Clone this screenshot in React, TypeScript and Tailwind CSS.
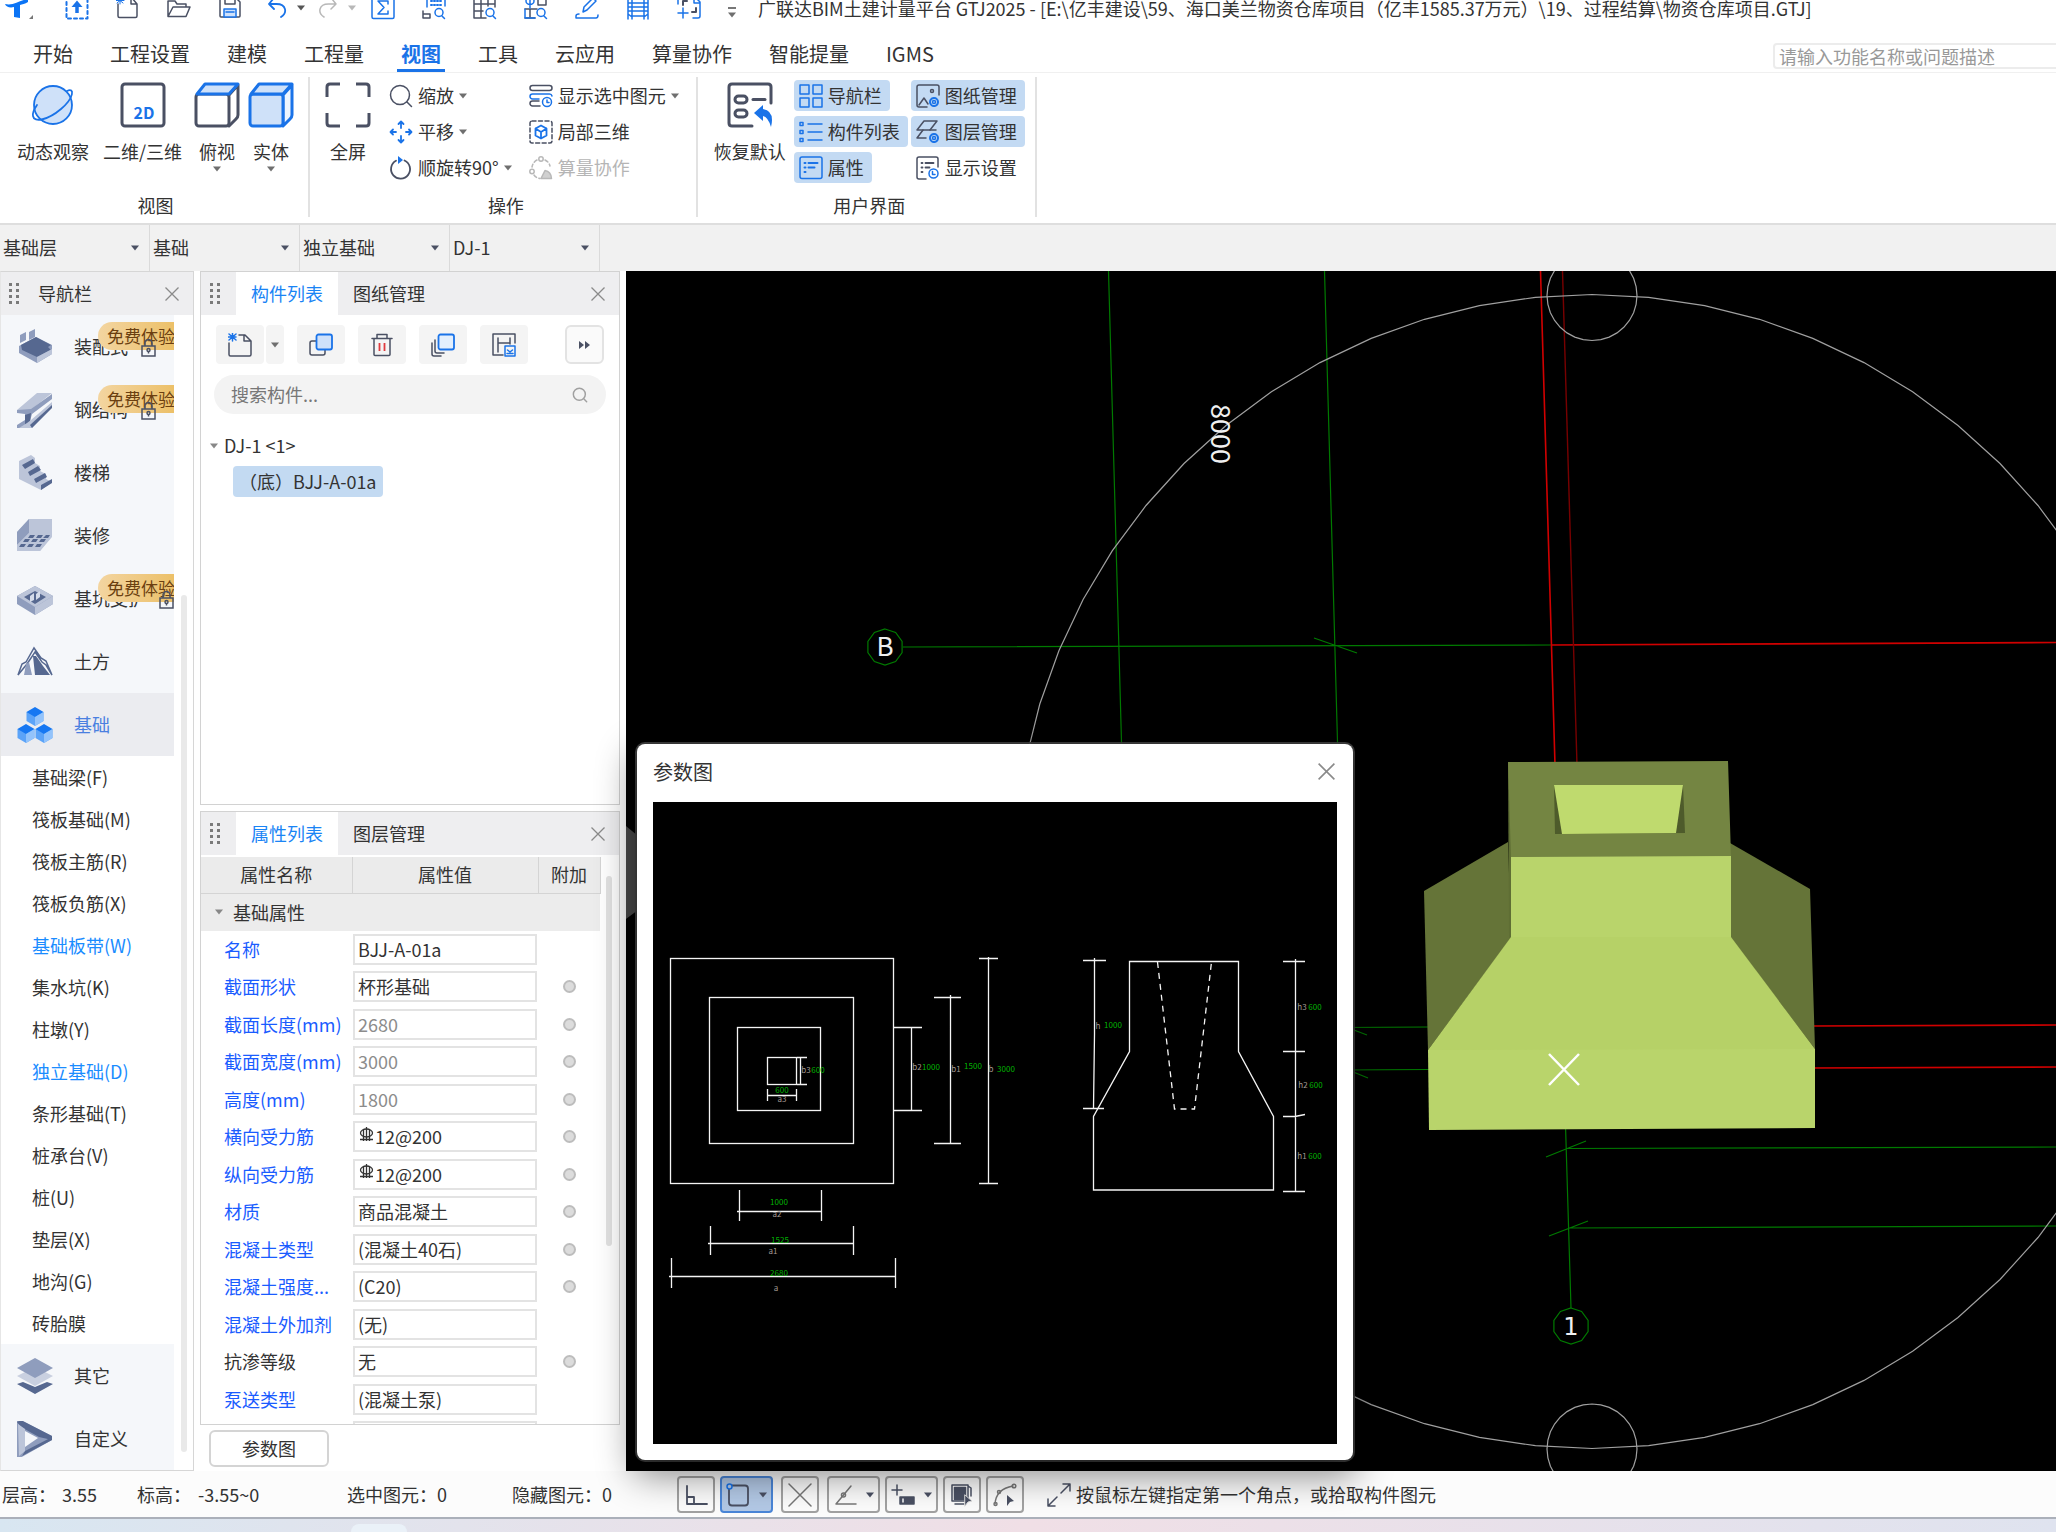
import React from "react";

type Kids = { children?: React.ReactNode };

const BLUE = "#1a73e8";
const SLATE = "#4a5063";

function Ico({ children, w = 24, h = 24, box = "0 0 24 24", c = SLATE, sw = 1.5 }: Kids & { w?: number; h?: number; box?: string; c?: string; sw?: number }) {
  return (
    <svg width={w} height={h} viewBox={box} fill="none" stroke={c} strokeWidth={sw} strokeLinecap="round" strokeLinejoin="round" className="shrink-0" aria-hidden="true">
      {children}
    </svg>
  );
}

function Caret({ c = "#6f6f6f" }: { c?: string }) {
  return (
    <svg width="8" height="6" viewBox="0 0 8 6" className="shrink-0" aria-hidden="true">
      <path d="M0 0.5h8L4 5.5z" fill={c} />
    </svg>
  );
}

function CloseIcon({ size = 14 }: { size?: number }) {
  return (
    <svg width={size} height={size} viewBox="0 0 14 14" stroke="#8a8a8a" strokeWidth="1.3" aria-hidden="true">
      <path d="M0.5 0.5l13 13M13.5 0.5l-13 13" />
    </svg>
  );
}

function Grip() {
  return (
    <svg width="11" height="22" viewBox="0 0 11 22" fill="#7a7a7a" className="shrink-0" aria-hidden="true">
      {[0, 6, 12, 18].map((y) => (
        <g key={y}>
          <rect x="0" y={y} width="3" height="3" />
          <rect x="7" y={y} width="3" height="3" />
        </g>
      ))}
    </svg>
  );
}

/* ---------- title bar ---------- */

const quick: { name: string; menu?: string; icon: React.ReactNode }[] = [
  { name: "上传", icon: <Ico c={BLUE}><path d="M1.500 0v22.500h21V0" strokeDasharray="3 3" strokeWidth="2" /><path d="M12 17V8" strokeWidth="3.500" strokeLinecap="butt" /><path d="M6.500 11L12 4.500 17.500 11z" fill={BLUE} stroke="none" /></Ico> },
  { name: "新建", icon: <Ico><path d="M2 8v12q0 1.500 1.500 1.500h16q1.500 0 1.500-1.500V8l-5-6h-5M15 3v5h6" /><path d="M1 2l6 5M7 2L1 7M4 1v7M0 4.500h8" stroke={BLUE} strokeWidth="1" /></Ico> },
  { name: "打开", icon: <Ico><path d="M1 20V5h7l2 3h9v3M1 20.500L6 11h17l-4 9.500z" /></Ico> },
  { name: "保存", icon: <Ico><path d="M2 20V4q0-1.500 1.500-1.500h15L22 6v14q0 1-1 1H3q-1 0-1-1zM7 3v5h10V3" /><path d="M6 21v-8h12v8z" fill="#cfe1fa" stroke={BLUE} /><path d="M8 16h8" stroke={BLUE} /></Ico> },
  { name: "撤销", menu: "#555555", icon: <span className="-ml-1 flex"><Ico c={BLUE} sw={1.8}><path d="M8 3L4 8l5 5M4 8h7.500c10 0 11 9 4.500 13" /></Ico></span> },
  { name: "恢复", menu: "#b8b8b8", icon: <span className="-ml-1 flex"><Ico c="#b8b8b8"><path d="M16 3l4 5-5 5M20 8h-7.500C2.500 8 1.500 17 8 21" /></Ico></span> },
  { name: "汇总计算", icon: <Ico c={BLUE}><rect x="1" y="0" width="22" height="22.500" rx="1.500" /><path d="M17 8V5H7l6 6.500L7 18h10v-3" /></Ico> },
  { name: "计算式", icon: <Ico c={BLUE}><path d="M5 2h18v8M5 2v9" /><path d="M9 5h1m2 0h1m2 0h1m2 0h1M9 9h1m2 0h1m2 0h1m2 0h1" strokeWidth="2" /><path d="M1 15v7h7v-4H1z" stroke={SLATE} /><circle cx="17" cy="16.500" r="4" /><path d="M20 20l2.500 2.500" /></Ico> },
  { name: "工程量表", icon: <Ico><path d="M1 2v20h12M1 8h21M1 15h9M8 2v20M15 2v8M22 2v9M1 2h21" /><circle cx="17" cy="16.500" r="4" stroke={BLUE} /><path d="M20 20l2.500 2.500" stroke={BLUE} /></Ico> },
  { name: "查看工程量", icon: <Ico><path d="M14 2v7h8V2M1 13h12M6 13v9M1 22h10" /><path d="M2 5a4 3.500 0 0 0 8 0 4 3.500 0 0 0-8 0M6 2v10M1 13v9M1 22h10" stroke={BLUE} /><circle cx="17" cy="16.500" r="4" stroke={BLUE} /><path d="M20 20l2.500 2.500" stroke={BLUE} /></Ico> },
  { name: "编辑", icon: <Ico c={BLUE}><path d="M8 16l1-5 9-9 3 3-9 9-4 2zM1 22v-2q0-2 3-2M1 22h20q2 0 2-3" /></Ico> },
  { name: "钢筋三维", icon: <Ico c={BLUE}><path d="M2 1v22M6 1v22M18 1v22M22 1v22M2 3h20M2 7h20M2 11h20M2 15h20M6 20h12M2 18l4 3M22 18l-4 3" /></Ico> },
  { name: "选择区域", icon: <Ico c={BLUE}><path d="M15 2h4l4 4v14q0 2-2 2h-5M17 2v5h6M1 17h10M6 12v10M1 8V3" /><path d="M6 9V5h4M19 12v4h-4" stroke={SLATE} strokeWidth="2" /></Ico> },
];

function TitleBar() {
  return (
    <div className="flex h-9 shrink-0 items-start overflow-hidden">
      <div className="-mt-1 flex h-6 items-center">
        <div className="w-[65px]">
          <svg width="36" height="24" viewBox="0 0 36 24" aria-label="GTJ" role="img">
            <path d="M5 8C14 10 20 4 28 3V6C25 8 22 8 20 9V22L14 21V11C10 12 6 11 5 8z" fill="#0b74f5" />
            <path d="M33 19v4h-4z" fill="#777" />
          </svg>
        </div>
        {quick.map((q) => (
          <button key={q.name} type="button" aria-label={q.name} className="flex w-[51px] items-center gap-2">
            {q.icon}
            {q.menu && <Caret c={q.menu} />}
          </button>
        ))}
        <button type="button" aria-label="自定义快速访问" className="mr-[22px] flex flex-col items-center gap-[3px] pt-2">
          <span className="h-[2px] w-2 bg-[#777]" />
          <Caret />
        </button>
        <h1 className="text-[18px] leading-6 whitespace-pre text-[#333]">广联达BIM土建计量平台 GTJ2025 - [E:\亿丰建设\59、海口美兰物资仓库项目（亿丰1585.37万元）\19、过程结算\物资仓库项目.GTJ]</h1>
      </div>
    </div>
  );
}

function MenuTabs() {
  const tabs = ["开始", "工程设置", "建模", "工程量", "视图", "工具", "云应用", "算量协作", "智能提量", "IGMS"];
  return (
    <div className="flex h-[37px] shrink-0 items-center justify-between border-b border-[#f0f0f0] pl-[33px]">
      <nav className="flex h-full gap-[29px]">
        {tabs.map((t) =>
          t === "视图" ? (
            <button key={t} type="button" className="h-full border-b-3 border-[#1a73e8] px-1 pt-[3px] text-[20px] font-bold text-[#1a73e8]">{t}</button>
          ) : (
            <button key={t} type="button" className="h-full border-b-3 border-transparent px-1 pt-[3px] text-[20px] text-[#333] first:pl-0">{t}</button>
          ),
        )}
      </nav>
      <input aria-label="搜索功能" placeholder="请输入功能名称或问题描述" className="mt-4 -mr-[7px] mb-3 h-[26px] w-[290px] rounded-sm border-2 border-[#ececec] px-1 text-[18px] text-[#333] placeholder:text-[#999]" />
    </div>
  );
}

/* ---------- ribbon ---------- */

function BigTool({ icon, label, caret }: { icon: React.ReactNode; label: string; caret?: boolean }) {
  return (
    <button type="button" className="flex flex-col items-center">
      <span className="flex h-[46px] items-center">{icon}</span>
      <span className="mt-[11px] mb-[3px] text-[18px] leading-6">{label}</span>
      {caret && <Caret />}
    </button>
  );
}

function SmallTool({ icon, label, caret, on, off }: { icon: React.ReactNode; label: string; caret?: boolean; on?: boolean; off?: boolean }) {
  return (
    <button
      type="button"
      disabled={off}
      aria-pressed={on}
      className="flex h-[31px] items-center gap-[5px] self-start rounded-sm pr-2 pl-[5px] text-[18px] disabled:text-[#b5b5b5] aria-pressed:bg-[#c3daf3]"
    >
      {icon}
      <span>{label}</span>
      {caret && <Caret />}
    </button>
  );
}

function Group({ label, children, pad }: Kids & { label: string; pad: string }) {
  return (
    <section className={`flex flex-col justify-between border-r-2 border-[#e2e2e2] ${pad}`}>
      <div className="flex items-start">{children}</div>
      <h2 className="text-center text-[18px] leading-6">{label}</h2>
    </section>
  );
}

const gear = <g stroke={BLUE}><circle cx="18" cy="18" r="4" strokeDasharray="2.200 1" strokeWidth="2" /><circle cx="18" cy="18" r="1.500" /></g>;

function Ribbon() {
  return (
    <div className="flex h-[152px] shrink-0 border-b-2 border-[#dedede] pt-1 pb-1.5 text-[#333]">
      <Group label="视图" pad="pl-[17px] pr-[14px]">
        <div className="flex pt-[5px]">
          <BigTool label="动态观察" icon={<Ico w={44} h={42} box="0 0 44 42" c={BLUE} sw={1.8}><circle cx="22" cy="21" r="19" fill="#cfe1f9" /><path d="M36 7C44 3 43 14 30 25 17 36 3 39 2 32 1 28 4 24 6 21" /></Ico>} />
          <div className="w-[14px]" />
          <BigTool label="二维/三维" icon={<svg width="46" height="46" viewBox="0 0 46 46" aria-hidden="true"><rect x="2" y="2" width="42" height="42" rx="3" fill="#fff" stroke={SLATE} strokeWidth="3" /><text x="24" y="37" textAnchor="middle" fontSize="16" fontWeight="700" fill={BLUE}>2D</text></svg>} />
          <div className="w-[12px]" />
          <BigTool caret label="俯视" icon={<Ico w={46} h={46} box="0 0 46 46" sw={3}><path d="M35 13L44 3v30q0 2-2 4l-7 7" /><rect x="2" y="12" width="33" height="32" rx="3" fill="#fff" /><path d="M3 12L11 2h33l-9 10z" fill="#cfe1f9" stroke={BLUE} /></Ico>} />
          <div className="w-[8px]" />
          <BigTool caret label="实体" icon={<Ico w={46} h={46} box="0 0 46 46" sw={3} c={BLUE}><path d="M35 13L44 3v30q0 2-2 4l-7 7z" fill="#eef5fe" /><rect x="2" y="12" width="33" height="32" rx="3" fill="#cfe1f9" /><path d="M3 12L11 2h33l-9 10z" fill="#cfe1f9" /></Ico>} />
        </div>
      </Group>
      <Group label="操作" pad="pl-[15px] pr-[9px]">
        <div className="pt-[5px]">
          <BigTool label="全屏" icon={<Ico w={46} h={46} box="0 0 46 46" sw={3}><path d="M2 15V5q0-3 3-3h10M31 2h10q3 0 3 3v10M44 31v10q0 3-3 3H31M15 44H5q-3 0-3-3V31" strokeLinecap="butt" /></Ico>} />
        </div>
        <div className="ml-[13px] flex flex-col gap-[5px] pt-[3px]">
          <SmallTool caret label="缩放" icon={<Ico><circle cx="11" cy="11" r="9.500" /><path d="M18 18l4.500 4.500" /></Ico>} />
          <SmallTool caret label="平移" icon={<Ico c={BLUE} sw={2}><path d="M9.500 4L12 1.500 14.500 4M12 2v6M9.500 20l2.500 2.500 2.500-2.500M12 22v-6M4 9.500L1.500 12 4 14.500M2 12h5M20 9.500l2.500 2.500-2.500 2.500M22 12h-5" strokeWidth="1.800" /></Ico>} />
          <SmallTool caret label="顺旋转90°" icon={<Ico sw={1.8}><path d="M15.500 4.500A9.500 9.500 0 1 1 7 4.800" /><path d="M9 0v8l5-4z" fill={BLUE} stroke="none" /></Ico>} />
        </div>
        <div className="flex flex-col gap-[5px] pt-[3px] pl-1">
          <SmallTool caret label="显示选中图元" icon={<Ico><rect x="1" y="1.500" width="22" height="5" rx="2.500" /><path d="M11 22H3.500a2.500 2.500 0 0 1 0-5H10" /><path d="M10 15H3.500a2.500 2.500 0 0 1 0-5h17q2 0 2.500 2" stroke={BLUE} /><circle cx="18" cy="18" r="4.500" stroke={BLUE} /><path d="M18 16v2.500h2" stroke={BLUE} /></Ico>} />
          <SmallTool label="局部三维" icon={<Ico><rect x="1" y="1" width="22" height="22" rx="2" strokeDasharray="4 2.500" /><g stroke={BLUE}><path d="M12 5.500l5.500 3v7L12 18.500l-5.500-3v-7zM6.500 8.500L12 12l5.500-3.500M12 12v6" strokeWidth="1.800" /></g></Ico>} />
          <SmallTool off label="算量协作" icon={<Ico c="#b8b8b8"><circle cx="12" cy="3" r="2.200" /><circle cx="3" cy="15.500" r="2.200" /><path d="M8 4Q4 6 3 11M16 4q4 2 5 6M5 19q2 3 6 3.500" strokeDasharray="3.500 2.500" /><path d="M12 22.500l4-8q6 1 6.500 8z" fill="#d0d0d0" /></Ico>} />
        </div>
      </Group>
      <Group label="用户界面" pad="pl-[16px] pr-[10px]">
        <div className="pt-[5px]">
          <BigTool label="恢复默认" icon={<Ico w={46} h={46} box="0 0 46 46" sw={3}><path d="M44 21V5q0-3-3-3H5Q2 2 2 5v36q0 3 3 3h20" /><rect x="8" y="14" width="12" height="7" rx="3.500" /><rect x="8" y="28" width="12" height="7" rx="3.500" /><path d="M26 17.500h12" /><path d="M44 45q4-16-8-18v-4l-9 8 9 8v-5q5 1 8 11z" fill={BLUE} stroke="none" /></Ico>} />
        </div>
        <div className="ml-2 flex flex-col gap-[5px] pt-[3px]">
          <SmallTool on label="导航栏" icon={<Ico c={BLUE}><rect x="1" y="1" width="9" height="9" /><rect x="14" y="1" width="9" height="9" /><rect x="1" y="14" width="9" height="9" /><rect x="14" y="14" width="9" height="9" /></Ico>} />
          <SmallTool on label="构件列表" icon={<Ico c={BLUE}><rect x="1" y="2.500" width="3" height="3" /><rect x="1" y="10.500" width="3" height="3" /><rect x="1" y="18.500" width="3" height="3" /><path d="M9 4h14M9 12h14M9 20h14" /></Ico>} />
          <SmallTool on label="属性" icon={<Ico c={BLUE}><rect x="1" y="1" width="22" height="21.500" rx="2" /><path d="M5.500 7h1M9.500 7h9M5.500 11.500h1M9.500 11.500h6M5.500 16h1" strokeWidth="2" /></Ico>} />
        </div>
        <div className="ml-[3px] flex flex-col gap-[5px] pt-[3px]">
          <SmallTool on label="图纸管理" icon={<Ico><path d="M23 11V3q0-2-2-2H3Q1 1 1 3v18q0 2 2 2h8" /><circle cx="16" cy="7" r="1.500" /><path d="M3 21l5-7 4 6" />{gear}</Ico>} />
          <SmallTool on label="图层管理" icon={<Ico><path d="M8 1h13l-7 9H1z" /><path d="M14 10h6M7 10l-6 8h9" />{gear}</Ico>} />
          <SmallTool label="显示设置" icon={<Ico><path d="M22 11V3q0-2-2-2H3Q1 1 1 3v18q0 2 2 2h7" /><path d="M5.500 7h1M9.500 7h8M5.500 11.500h1M9.500 11.500h4M5.500 16h1" strokeWidth="1.800" /><circle cx="17.500" cy="17.500" r="4.500" stroke={BLUE} /><path d="M16.500 15.500v3h2.500" stroke={BLUE} /></Ico>} />
        </div>
      </Group>
    </div>
  );
}

function Selectors() {
  return (
    <div className="flex h-[46px] shrink-0 bg-[#f1f1f1] text-[#333]">
      {[["楼层", "基础层"], ["类别", "基础"], ["构件类型", "独立基础"], ["构件", "DJ-1"]].map(([n, v]) => (
        <div key={n} className="relative h-full w-[150px] border-r border-[#dadada]">
          <select aria-label={n} defaultValue={v} className="h-[45px] w-full appearance-none bg-transparent pl-[3px] text-[18px]">
            <option>{v}</option>
          </select>
          <span className="pointer-events-none absolute inset-y-0 right-2.5 flex items-center"><Caret c="#4a5063" /></span>
        </div>
      ))}
    </div>
  );
}

/* ---------- navigation ---------- */

const L = "#bcc5d9", M = "#8f9dbd", D = "#566890";

function NavIcon({ kind }: { kind: string }) {
  const art: Record<string, React.ReactNode> = {
    装配式: <><path d="M3 6l6-3v8l-6 3zM12 3l6-3v8l-6 3z" fill={M} /><path d="M2 17l17-9 16 8v9l-15 9L2 24z" fill={M} /><path d="M4 16L19 8l15 8-3 2 3 3-14 7L5 21z" fill={D} /><path d="M20 28l15-8v5l-15 9z" fill={L} /></>,
    钢结构: <><path d="M0 18L20 1h15L15 17l-2 3H0z" fill={L} /><path d="M0 18l14-1L35 2v5L15 22l-2 7v7H0v-3l8-5v-6L0 21z" fill={M} /><path d="M8 23l6-2-1 9-5 3z" fill={D} /><path d="M14 28L35 10v5L15 36H2l8-5z" fill={L} /><path d="M13 33L35 13v3L15 36z" fill={D} /></>,
    楼梯: <><path d="M2 6l12-6 4 3v5l5 3v5l6 3v5l6 3-11 8L2 24z" fill={L} /><path d="M5 10l11-6 2 4-10 6zM11 17l10-6 3 4-11 6zM17 24l11-6 2 4-11 6zM24 30l11-6v4l-11 7z" fill={D} /></>,
    装修: <><path d="M0 14L12 1h23v17L23 33H0z" fill={L} /><path d="M12 1v14L0 27V14z" fill={M} /><path d="M12 15h23v4L23 33H0v-6z" fill={L} /><path d="M13 17h5l-2 3h-5zM21 17h5l-2 3h-5zM29 17h4l-2 3h-5zM8 21h5l-2 3H6zM16 21h5l-2 3h-5zM24 21h5l-2 3h-5zM4 26h5l-2 3H2zM12 26h5l-2 3h-5zM20 26h5l-2 3h-5z" fill={D} /></>,
    基坑支护: <><path d="M18 5l18 10v8L18 34 0 23v-8z" fill={M} /><path d="M18 5l18 10-18 11L0 15z" fill={L} /><path d="M18 26l18-11v8L18 34z" fill={L} /><path d="M18 10l11 6-11 7-11-7z" fill={D} /><path d="M13 15l4-3v7l-4 2zM19 13l4-3v6l-4 3z" fill="#d5dcea" /></>,
    土方: <><path d="M1 31L5 20l4-2 8-14 7 10 5 3 6 14-6-10-4-3-7-10-8 12z" fill="none" stroke={D} strokeWidth="1.500" /><path d="M16 12l3 0 7 10 7 9H18z" fill={D} /><path d="M9 20l3-2 3 13H7z" fill={M} /></>,
    基础: <>{[[18, 0], [9, 17], [27, 17]].map(([x, y]) => <g key={x} transform={`translate(${x} ${y})`}><path d="M-8.500 5v9l8.500 5 8.500-5V5z" fill="#5ba3f8" /><path d="M0 0l8.500 5L0 10l-8.500-5z" fill="#1677f2" /><path d="M0 10v9l8.500-5V5z" fill="#93c3fb" /></g>)}</>,
    其它: <><path d="M0 26l6-2 12 5 12-5 6 2-18 10z" fill={D} /><path d="M18 9l18 9-18 10L0 18z" fill="#c9d0e0" /><path d="M18 0l18 10-18 10L0 10z" fill={M} /></>,
    自定义: <><path d="M0 0l3-1 32 16v4L3 37H0z" fill={M} /><path d="M0 1l4-2 31 16v4l-13-3L4 6z" fill={D} /><path d="M8 10v16l13-9z" fill="#f5f7fa" /><path d="M8 30l27-14v3L5 35z" fill={D} /><path d="M1 3l7 5v22l-6 5z" fill={L} /></>,
  };
  return <svg width="36" height="36" viewBox="0 0 36 36" className="shrink-0" aria-hidden="true">{art[kind]}</svg>;
}

function Lock() {
  return (
    <svg width="15" height="18" viewBox="0 0 15 18" fill="none" stroke="#4a5063" strokeWidth="1.500" aria-hidden="true">
      <path d="M4 7V4a3.500 3.500 0 0 1 7 0v3" /><rect x="1" y="7" width="13" height="10" /><circle cx="7.500" cy="11" r="1.500" /><path d="M7.500 12v2.500" />
    </svg>
  );
}

function NavItem({ name, lock, active }: { name: string; lock?: "near" | "far"; active?: boolean }) {
  return (
    <button type="button" aria-current={active} className="relative flex h-[63px] w-[173px] shrink-0 items-center gap-[21px] bg-[#f5f7fa] pl-[16px] text-[18px] text-[#333] aria-[current=true]:bg-[#ebecf0] aria-[current=true]:text-[#4a7fe0]">
      <NavIcon kind={name} />
      <span className="whitespace-nowrap">{name}</span>
      {lock && (
        <>
          <span className="absolute top-[7px] right-0 h-7 w-[76px] overflow-hidden rounded-l-full bg-linear-to-r from-[#f3d5a0] to-[#ecc068] pl-[9px] text-left text-[17px] leading-7 whitespace-nowrap text-[#6b3f10]">免费体验</span>
          {lock === "near" ? <span className="absolute top-6 right-[18px]"><Lock /></span> : <span className="absolute top-6 right-0"><Lock /></span>}
        </>
      )}
    </button>
  );
}

function Navigator() {
  const subs = ["基础梁(F)", "筏板基础(M)", "筏板主筋(R)", "筏板负筋(X)", "基础板带(W)", "集水坑(K)", "柱墩(Y)", "独立基础(D)", "条形基础(T)", "桩承台(V)", "桩(U)", "垫层(X)", "地沟(G)", "砖胎膜"];
  const hot = ["基础板带(W)", "独立基础(D)"];
  return (
    <aside className="relative flex w-[194px] shrink-0 flex-col overflow-hidden border border-[#d6d6d6] border-l-[#e6e6e6] bg-white">
      <header className="flex h-[43px] shrink-0 items-center bg-[#eeeef0] pr-3.5 pl-2">
        <Grip />
        <h2 className="ml-[18px] flex-1 text-[18px] text-[#333]">导航栏</h2>
        <button type="button" aria-label="关闭"><CloseIcon /></button>
      </header>
      <NavItem name="装配式" lock="near" />
      <NavItem name="钢结构" lock="near" />
      <NavItem name="楼梯" />
      <NavItem name="装修" />
      <NavItem name="基坑支护" lock="far" />
      <NavItem name="土方" />
      <NavItem name="基础" active />
      <ul>
        {subs.map((s) => (
          <li key={s}>
            {hot.includes(s) ? (
              <button type="button" className="block h-[42px] w-full pl-[31px] text-left text-[18px] text-[#1a8cff]">{s}</button>
            ) : (
              <button type="button" className="block h-[42px] w-full pl-[31px] text-left text-[18px] text-[#333]">{s}</button>
            )}
          </li>
        ))}
      </ul>
      <NavItem name="其它" />
      <NavItem name="自定义" />
      <span className="absolute top-[323px] right-[6px] bottom-[18px] w-[6px] rounded-full bg-[#e9e9e9]" />
    </aside>
  );
}

/* ---------- component list and properties ---------- */

function DockHeader({ tabs }: { tabs: [string, string] }) {
  return (
    <header className="flex h-[43px] shrink-0 items-center bg-[#eeeef0] pr-[14px] pl-[9px] text-[18px]">
      <Grip />
      <button type="button" className="ml-[15px] h-full w-[102px] bg-white text-[#1a84f5]">{tabs[0]}</button>
      <button type="button" className="h-full w-[102px] text-[#333]">{tabs[1]}</button>
      <button type="button" aria-label="关闭" className="ml-auto"><CloseIcon /></button>
    </header>
  );
}

const toolBtn = "flex h-[39px] w-[48px] items-center justify-center rounded-sm bg-[#f4f4f4]";

function ComponentList() {
  return (
    <section className="flex h-[534px] shrink-0 flex-col border border-[#d2d2d2] bg-white">
      <DockHeader tabs={["构件列表", "图纸管理"]} />
      <div className="flex items-center gap-[13px] pt-[10px] pr-[15px] pl-[15px]">
        <div className="flex gap-[2px]">
          <button type="button" aria-label="新建" className={toolBtn}><Ico><path d="M1 10v11.500Q1 23 2.500 23h19q1.500 0 1.500-1.500V8l-6-6h-6M16 2v6h7" /><path d="M1 1l7 6M8 1L1 7M4.500 0v8M0 4h8" stroke={BLUE} strokeWidth="1.500" /></Ico></button>
          <button type="button" aria-label="新建选项" className="flex h-[39px] w-[18px] items-center justify-center rounded-sm bg-[#f4f4f4]"><Caret /></button>
        </div>
        <button type="button" aria-label="复制" className={toolBtn}><Ico><rect x="1" y="8" width="15" height="14" rx="2" /><rect x="7.500" y="1.500" width="15.500" height="15" rx="2" fill="#cfe1fa" stroke={BLUE} strokeWidth="1.800" /></Ico></button>
        <button type="button" aria-label="删除" className={toolBtn}><Ico><path d="M2 5.500h20M7 5.500v-4h10v4M4 5.500v16q0 1 1 1h14q1 0 1-1v-16" /><path d="M9.500 10v8M14.500 10v8" stroke="#e03a3e" strokeWidth="1.800" strokeLinecap="butt" /></Ico></button>
        <button type="button" aria-label="层间复制" className={toolBtn}><Ico><path d="M1 10v11q0 2 2 2h7M4 7v11q0 2 2 2h7" /><rect x="7.500" y="1.500" width="15.500" height="15" rx="2" fill="#e3effd" stroke={BLUE} strokeWidth="1.800" /></Ico></button>
        <button type="button" aria-label="存档" className={toolBtn}><Ico><path d="M23 10V1H1v21h10M6 5v14M6 10h11M18 5v6" /><rect x="13" y="13" width="10" height="10" stroke={BLUE} /><path d="M15 20.500h6M15.500 17l2.500 2 2.500-2" stroke={BLUE} /></Ico></button>
        <button type="button" aria-label="更多" className="ml-auto flex h-[39px] w-[39px] items-center justify-center rounded-md border-2 border-[#e3e3e3] bg-[#fafafa]">
          <svg width="11" height="8" viewBox="0 0 11 8" fill={SLATE} aria-hidden="true"><path d="M0 0l5 4-5 4zM6 0l5 4-5 4z" /></svg>
        </button>
      </div>
      <label className="mx-[13px] mt-[11px] flex h-[39px] items-center rounded-full bg-[#f3f3f3] pr-[18px] pl-[17px]">
        <input aria-label="搜索构件" placeholder="搜索构件..." className="min-w-0 flex-1 bg-transparent text-[18px] placeholder:text-[#777]" />
        <Ico w={16} h={16} c="#a0a0a0" sw={2.2}><circle cx="11" cy="11" r="9" /><path d="M18 18l4 4" /></Ico>
      </label>
      <ul className="mt-4 text-[18px] text-[#333]">
        <li>
          <button type="button" className="flex h-[31px] items-center gap-1.5 pl-[9px]"><Caret c="#888" /><span>DJ-1 &lt;1&gt;</span></button>
          <ul>
            <li className="mt-[5px] ml-8 h-[31px] w-[150px] rounded-sm bg-[#c3daf2] pl-1.5 leading-[31px] whitespace-nowrap">（底）BJJ-A-01a</li>
          </ul>
        </li>
      </ul>
    </section>
  );
}

const props: { n: string; v: string; k?: "ro" | "plain" | "bar"; dot?: boolean }[] = [
  { n: "名称", v: "BJJ-A-01a" },
  { n: "截面形状", v: "杯形基础", dot: true },
  { n: "截面长度(mm)", v: "2680", k: "ro", dot: true },
  { n: "截面宽度(mm)", v: "3000", k: "ro", dot: true },
  { n: "高度(mm)", v: "1800", k: "ro", dot: true },
  { n: "横向受力筋", v: "12@200", k: "bar", dot: true },
  { n: "纵向受力筋", v: "12@200", k: "bar", dot: true },
  { n: "材质", v: "商品混凝土", dot: true },
  { n: "混凝土类型", v: "(混凝土40石)", dot: true },
  { n: "混凝土强度...", v: "(C20)", dot: true },
  { n: "混凝土外加剂", v: "(无)" },
  { n: "抗渗等级", v: "无", k: "plain", dot: true },
  { n: "泵送类型", v: "(混凝土泵)" },
];

function PropertyList() {
  return (
    <section className="relative flex h-[614px] shrink-0 flex-col overflow-hidden border border-[#d2d2d2] bg-white">
      <DockHeader tabs={["属性列表", "图层管理"]} />
      <table className="mt-[2px] h-[561px] w-[399px] shrink-0 table-fixed border-collapse text-[18px] text-[#333]">
        <colgroup>
          <col className="w-[151px]" />
          <col className="w-[186px]" />
          <col className="w-[62px]" />
        </colgroup>
        <thead>
          <tr className="h-[36px] bg-[#ebebeb]">
            {["属性名称", "属性值", "附加"].map((h) => (
              <th key={h} scope="col" className="border-r border-b border-[#d4d4d4] p-0 font-normal">{h}</th>
            ))}
          </tr>
        </thead>
        <tbody>
          <tr className="h-[37px] bg-[#ececec]">
            <th colSpan={3} scope="colgroup" className="p-0 text-left font-normal">
              <span className="flex items-center gap-[10px] pl-[14px]"><Caret c="#888" />基础属性</span>
            </th>
          </tr>
          {props.map((p, i) => (
            <tr key={p.n} className="h-[37px]">
              <th scope="row" className="p-0 pl-[23px] text-left font-normal whitespace-nowrap">
                {p.k === "plain" ? <label htmlFor={`p${i}`}>{p.n}</label> : <label htmlFor={`p${i}`} className="text-[#1a5cff]">{p.n}</label>}
              </th>
              <td className="p-0 px-px">
                <span className="flex h-[31px] items-center border-2 border-[#e3e3e3] bg-white pl-[3px]">
                  {p.k === "bar" && (
                    <svg width="17" height="16" viewBox="0 0 17 16" fill="none" stroke="#333" strokeWidth="1.300" className="mb-1 shrink-0" aria-hidden="true">
                      <ellipse cx="8.500" cy="6" rx="6" ry="4" /><path d="M8.500 0v14M5.500 3v11M11.500 3v11M2 12.500h13" />
                    </svg>
                  )}
                  {p.k === "ro" ? (
                    <input id={`p${i}`} readOnly value={p.v} className="w-full min-w-0 text-[#8c8c8c]" />
                  ) : (
                    <input id={`p${i}`} defaultValue={p.v} className="w-full min-w-0" />
                  )}
                </span>
              </td>
              <td className="p-0">
                {p.dot && <button type="button" aria-label={`附加${p.n}`} className="mx-auto block size-[13px] rounded-full border-2 border-[#bdbdbd] bg-[#dcdcdc]" />}
              </td>
            </tr>
          ))}
        </tbody>
      </table>
      <div className="mt-[3px] ml-[152px] h-[31px] w-[184px] shrink-0 border-2 border-[#e3e3e3]" />
      <span className="absolute top-[64px] right-[7px] h-[370px] w-[6px] rounded-full bg-[#e2e2e2]" />
    </section>
  );
}

/* ---------- model view ---------- */

function ring(cx: number, cy: number, r: number, n: number) {
  return Array.from({ length: n }, (_, i) => {
    const a = (i / n) * Math.PI * 2;
    return `${(cx + r * Math.sin(a)).toFixed(1)},${(cy - r * Math.cos(a)).toFixed(1)}`;
  }).join(" ");
}

function ModelView() {
  return (
    <svg className="h-full w-full" viewBox="626 271 1430 1200" preserveAspectRatio="xMinYMin slice" fill="none" role="img" aria-label="三维模型">
      <g stroke="#007a00" strokeWidth="1.200">
        <path d="M1108.500 271L1122 760M1324.500 271L1338 760M903 647L1552 645M1314 638L1357 653" />
        <path d="M1340 1027.500L1428 1027M1340 1070L1430 1069.500M1346 1027L1367 1035M1346 1069L1368 1078" />
        <path d="M1565.500 1125L1571 1308M1566 1148.500L2056 1147M1546 1157L1586 1141M1568 1228L2056 1226M1549 1236L1588 1221" />
        <polygon points={ring(885, 647, 18, 10)} />
        <polygon points={ring(1571, 1326, 18, 10)} />
      </g>
      <path d="M1540.500 271L1555 765M1552 645L2056 642.500M1812 1026L2056 1025M1812 1068L2056 1067" stroke="#d00000" strokeWidth="1.600" />
      <path d="M1562.500 271L1577 765" stroke="#780000" strokeWidth="1.400" />
      <g stroke="#a0a0a0" strokeWidth="1.200">
        <polygon points={ring(1592, 871.5, 577, 64)} />
        <polygon points={ring(1592, 295.5, 45, 32)} />
        <polygon points={ring(1592, 1449, 45, 32)} />
      </g>
      <polygon points="1508,842 1424,891 1428,1050 1511,938" fill="#657438" />
      <polygon points="1730,843 1810,889 1815,1049 1731,938" fill="#657438" />
      <polygon points="1508,762 1512,762 1512,938 1509,938" fill="#5f6e34" />
      <polygon points="1508,762 1728,761 1731,857 1511,858" fill="#748542" />
      <polygon points="1554,786 1683,785 1685,833 1555,834" fill="#4e5b2b" />
      <polygon points="1554,785 1683,785 1676,833 1562,834" fill="#bfda6e" />
      <polygon points="1511,857 1731,856 1731,939 1511,939" fill="#b9d46b" />
      <polygon points="1511,937 1731,937 1815,1049 1815,1053 1428,1053 1428,1050" fill="#b6d167" />
      <polygon points="1428,1050 1815,1049 1815,1128 1429,1130" fill="#b9d46b" />
      <path d="M1549 1054l30 31M1579 1054l-30 31" stroke="#fff" strokeWidth="2.500" />
      <g fill="#f0f0f0" textAnchor="middle">
        <text x="885" y="656" fontSize="26">B</text>
        <text x="1571" y="1335" fontSize="24" fontFamily="DejaVu Sans, sans-serif">1</text>
        <text transform="translate(1211 434) rotate(90)" fontSize="27">8000</text>
      </g>
      <path d="M626 826l12 10v74l-12 9z" fill="#4a4a4a" />
    </svg>
  );
}

function ParamDrawing() {
  const green: [number, number, string][] = [
    [782, 1093, "600"], [818, 1073, "600"], [931, 1070, "1000"], [973, 1069, "1500"], [1006, 1072, "3000"],
    [779, 1205, "1000"], [780, 1243, "1525"], [779, 1276, "2680"],
    [1113, 1028, "1000"], [1315, 1010, "600"], [1316, 1088, "600"], [1315, 1159, "600"],
  ];
  const grey: [number, number, string][] = [
    [782, 1102, "a3"], [806, 1073, "b3"], [917, 1070, "b2"], [956, 1072, "b1"], [991, 1072, "b"],
    [777, 1217, "a2"], [773, 1254, "a1"], [776, 1291, "a"],
    [1098, 1029, "h"], [1302, 1010, "h3"], [1303, 1088, "h2"], [1302, 1159, "h1"],
  ];
  return (
    <svg className="h-full w-full bg-black" viewBox="653 802 684 642" fill="none" role="img" aria-label="杯形基础参数图">
      <g stroke="#f4f4f4" strokeWidth="1.300">
        <rect x="670.500" y="958.500" width="223" height="225" />
        <rect x="709.500" y="997.500" width="144" height="146" />
        <rect x="737.500" y="1027.500" width="83" height="83" />
        <rect x="767.500" y="1057.500" width="29" height="27" />
        <path d="M800.500 1058v27M797 1057.500h10M797 1084.500h10M768 1095.500h29M767.500 1089v12M796.500 1089v12" />
        <path d="M894 1027.500h28M894 1110.500h28M911.500 1028v82M934 997.500h27M934 1143.500h27M950.500 995v148M979 958.500h19M979 1183.500h19M988.500 957v227" />
        <path d="M737 1211.500h85M739.500 1190v31M821.500 1190v31M708 1243.500h145M710.500 1226v29M853.500 1226v29M669 1276.500h226M671.500 1258v30M895.500 1258v30" />
        <path d="M1129.500 961.500h109v90l35 65v73.500h-180v-73.500l36-65z" />
        <path d="M1094.500 958v76l-1 74M1083 960.500h23M1083 1108.500h21M1295.500 959v233M1283 961.500h22M1283 1051.500h22M1283 1116.500h12l10-2M1283 1191.500h22" />
        <path d="M1157.500 962l17 147h20l17-147" strokeDasharray="6 5" />
      </g>
      <g fontSize="8" textAnchor="middle">
        {green.map(([x, y, t]) => <text key={`${x}${y}`} x={x} y={y} fill="#00b400">{t}</text>)}
        {grey.map(([x, y, t]) => <text key={`${x}${y}`} x={x} y={y} fill="#a39a94">{t}</text>)}
      </g>
    </svg>
  );
}

function ParamDialog() {
  return (
    <div role="dialog" aria-label="参数图" className="absolute top-[473px] left-[11px] z-20 flex h-[716px] w-[716px] flex-col rounded-lg bg-white px-4 pb-4 shadow-[0_12px_36px_4px_rgba(0,0,0,0.45),0_0_0_2px_rgba(70,70,70,0.9)]">
      <header className="flex h-[58px] shrink-0 items-center justify-between pr-0.5 pb-[3px]">
        <h2 className="text-[20px] text-[#333]">参数图</h2>
        <button type="button" aria-label="关闭"><CloseIcon size={17} /></button>
      </header>
      <div className="min-h-0 flex-1"><ParamDrawing /></div>
    </div>
  );
}

/* ---------- status bar ---------- */

function StatusTool({ name, children, menu, on }: Kids & { name: string; menu?: boolean; on?: boolean }) {
  return (
    <button type="button" aria-label={name} aria-pressed={on} className="flex h-[37px] min-w-[38px] items-center justify-center gap-[9px] rounded-sm border-2 border-[#a2a2a2] px-1 aria-pressed:border-[#4a86d8] aria-pressed:bg-[#b3c9e6]">
      {children}
      {menu && <Caret c="#4a5063" />}
    </button>
  );
}

function StatusBar() {
  return (
    <footer className="flex h-[46px] shrink-0 items-center bg-[#fcfcfc] pt-px text-[18px] whitespace-nowrap text-[#333]">
      <span className="w-[62px] pl-[2px]">层高：</span>
      <span className="w-[75px]">3.55</span>
      <span className="w-[61px]">标高：</span>
      <span className="w-[149px]">-3.55~0</span>
      <span className="w-[165px]">选中图元：0</span>
      <span className="w-[165px]">隐藏图元：0</span>
      <div className="flex items-center gap-[5px]">
        <StatusTool name="正交"><Ico><path d="M3 3v18h20M3 14h7v7" strokeWidth="1.800" /></Ico></StatusTool>
        <StatusTool name="捕捉" menu on><Ico><rect x="3" y="2.500" width="19" height="20" rx="3" strokeWidth="1.800" /><circle cx="3.500" cy="3.500" r="2.500" stroke={BLUE} fill="#b3c9e6" /></Ico></StatusTool>
        <span className="ml-[3px]"><StatusTool name="交点"><Ico c="#777"><path d="M1 1l22 22M23 1L1 23" /></Ico></StatusTool></span>
        <span className="ml-[3px]"><StatusTool name="角度" menu><Ico c="#777"><path d="M18 3L3 21h20" /><circle cx="10.500" cy="12" r="2" /></Ico></StatusTool></span>
        <StatusTool name="动态输入" menu><Ico><path d="M1 7h10M6 2v10" /><rect x="9" y="14" width="14" height="7" fill={SLATE} /><path d="M12 16v3" stroke="#fff" /></Ico></StatusTool>
        <StatusTool name="选择"><Ico><rect x="4.500" y="4.500" width="11" height="12" fill={SLATE} /><path d="M2 2h16v16H2zM5 21h9M21 5v8M18 3l3 2" /><path d="M15 12l7 6-4 1-3 4z" fill={SLATE} stroke="#ddd" strokeWidth="1" /></Ico></StatusTool>
        <StatusTool name="弧线"><Ico c="#777"><path d="M2 21Q3 6 20 3" /><circle cx="2.500" cy="21" r="1.500" /><circle cx="21" cy="3" r="1.800" /><circle cx="6" cy="9" r="1.500" /><path d="M14 12l7 6-4 1-3 4z" fill={SLATE} stroke="none" /></Ico></StatusTool>
      </div>
      <span className="ml-[23px] flex items-center gap-[5px]">
        <Ico><path d="M14 10l9-9M16 1h7v7M10 14l-9 9M1 16v7h7" /></Ico>
        按鼠标左键指定第一个角点，或拾取构件图元
      </span>
    </footer>
  );
}

export default function App() {
  return (
    <div className="flex h-screen flex-col overflow-hidden bg-white [font-family:'Noto_Sans_CJK_SC',sans-serif]">
      <TitleBar />
      <MenuTabs />
      <Ribbon />
      <Selectors />
      <main className="flex min-h-0 flex-1 bg-white">
        <Navigator />
        <div className="ml-1.5 flex w-[420px] shrink-0 flex-col overflow-hidden">
          <ComponentList />
          <div className="h-[6px] shrink-0" />
          <PropertyList />
          <button type="button" className="mt-[5px] ml-[9px] h-[37px] w-[120px] shrink-0 rounded-md border-2 border-[#d4d4d4] bg-white text-[18px] text-[#333]">参数图</button>
        </div>
        <div className="relative z-10 ml-1.5 min-w-0 flex-1 bg-black">
          <div className="h-full overflow-hidden"><ModelView /></div>
          <ParamDialog />
        </div>
      </main>
      <StatusBar />
      <div className="flex h-[15px] shrink-0 items-end border-t-2 border-[#abb0ba] bg-linear-to-r from-[#d8e6f1] via-[#f0dfe6] to-[#dfe3ef] pl-[351px]">
        <span className="h-2 w-14 rounded-t-lg bg-[#eaf1f8]" />
      </div>
    </div>
  );
}
